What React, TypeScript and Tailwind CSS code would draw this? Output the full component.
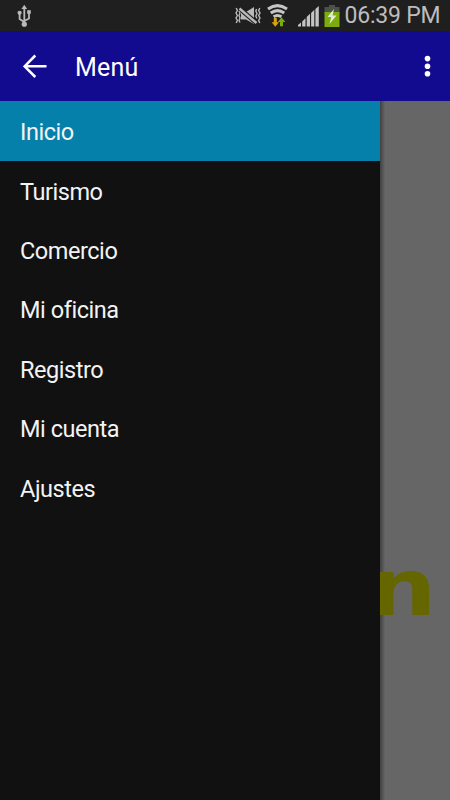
import React, { useState } from 'react';

const menuItems = ['Inicio', 'Turismo', 'Comercio', 'Mi oficina', 'Registro', 'Mi cuenta', 'Ajustes'];

function UsbIcon() {
  return (
    <svg width="16" height="24" viewBox="0 0 16 24" fill="none" stroke="#b9b9b9" strokeWidth="1.8">
      <path d="M8.3 4V20M8.3 18L3.6 15V10M8.3 17L13 14.5V9" />
      <path d="M8.3 0.8L11.2 5H5.4Z" fill="#b9b9b9" stroke="none" />
      <circle cx="8.3" cy="20.2" r="2.6" fill="#b9b9b9" stroke="none" />
      <circle cx="3.6" cy="8.8" r="2.1" fill="#b9b9b9" stroke="none" />
      <path d="M11.2 6.2H14.8V9.8H11.2Z" fill="#b9b9b9" stroke="none" />
    </svg>
  );
}

function MuteVibrateIcon() {
  return (
    <svg width="26" height="20" viewBox="0 0 26 20" fill="none" stroke="#b9b9b9">
      <path d="M6 6H11L19 1V18L11 13.5H6Z" fill="#b9b9b9" stroke="none" />
      <path d="M4.5 2.5L21.5 17" stroke="#1f1f1f" strokeWidth="4.6" />
      <path d="M4.5 2.5L21.5 17" strokeWidth="2.4" />
      <path
        d="M1.2 2L2.4 4.5L1 7L2.4 9.5L1 12L2.4 14.5L1.2 17M4 5L5 7L4 9.5L5 12L4 14.5L5 16.5M24.8 2L23.6 4.5L25 7L23.6 9.5L25 12L23.6 14.5L24.8 17M21.6 3L20.8 5L22 7.5L20.8 10L22 12.5"
        strokeWidth="1.4"
      />
    </svg>
  );
}

function WifiIcon() {
  return (
    <svg width="22" height="24" viewBox="0 0 22 24" fill="none" stroke="#c6c6c6" strokeWidth="3">
      <path d="M1 5Q10.5 -1.8 20 5M3.8 9Q10.5 4.2 17.2 9M6.6 12.8Q10.5 10.2 14.4 12.8" />
      <path d="M6.8 14H9.8V18.3H12L8.3 22.8L4.6 18.3H6.8Z" fill="#d6a411" stroke="none" />
      <path d="M13 22.3H16V18H18.4L14.5 13.3L10.8 18H13Z" fill="#78ad0b" stroke="none" />
    </svg>
  );
}

function SignalIcon() {
  return (
    <svg width="21" height="21" viewBox="0 0 21 21" fill="#c4c4c4">
      <path d="M0 20.5V19L3 16.5V20.5ZM4.2 20.5V15.5L7.5 12.2V20.5ZM8.7 20.5V11L12 7.8V20.5ZM13.1 20.5V7L16.3 3.8V20.5ZM17.4 20.5V3L20.8 0V20.5Z" />
    </svg>
  );
}

function BatteryIcon() {
  return (
    <svg width="16" height="22" viewBox="0 0 16 22">
      <path d="M5 0H11V2H15.5V9H0.5V2H5Z" fill="#4c5247" />
      <path d="M0.5 7H15.5V22H0.5Z" fill="#7cac0b" />
      <path d="M10 4L3.5 12H7.2L5.5 19L12.5 10.5H8.5Z" fill="#e5ead8" />
    </svg>
  );
}

function StatusBar() {
  return (
    <div className="flex h-[31px] shrink-0 bg-[#1f1f1f] pl-4">
      <div className="pt-1">
        <UsbIcon />
      </div>
      <div className="ml-auto flex items-start">
        <div className="pt-[6px]">
          <MuteVibrateIcon />
        </div>
        <div className="pt-[4px] pl-[6px]">
          <WifiIcon />
        </div>
        <div className="pt-[6px] pl-[9px]">
          <SignalIcon />
        </div>
        <div className="pt-[5px] pl-[5px]">
          <BatteryIcon />
        </div>
        <span className="w-[110px] pl-[4.5px] text-[23px] leading-[32px] tracking-[-0.2px] whitespace-nowrap text-[#bdbdbd]">
          06:39 PM
        </span>
      </div>
    </div>
  );
}

function AppBar() {
  return (
    <header className="flex h-[70px] shrink-0 items-center bg-[#120a8f] pr-[19px] pl-[23px] text-white">
      <button aria-label="Volver">
        <svg width="24" height="24" viewBox="0 0 24 24" fill="none" stroke="currentColor" strokeWidth="2.5">
          <path d="M23.5 12.3H2M12.3 1.5L1.6 12.3L12.3 23" />
        </svg>
      </button>
      <h1 className="ml-7 pt-[3px] text-[25px] leading-8 tracking-[0.2px]">Menú</h1>
      <button aria-label="Más opciones" className="ml-auto">
        <svg width="7" height="22" viewBox="0 0 7 22" fill="currentColor">
          <circle cx="3.5" cy="3.6" r="2.8" />
          <circle cx="3.5" cy="11.2" r="2.8" />
          <circle cx="3.5" cy="18.8" r="2.8" />
        </svg>
      </button>
    </header>
  );
}

export default function App() {
  const [active, setActive] = useState('Inicio');

  return (
    <div className="flex h-[800px] w-[450px] flex-col overflow-hidden bg-[#666666] font-['Roboto',sans-serif]">
      <StatusBar />
      <AppBar />
      <div className="flex flex-1">
        {/* Drawer */}
        <nav className="z-10 w-[380px] shrink-0 bg-[#111111]">
          {menuItems.map((item) => (
            <button
              key={item}
              onClick={() => setActive(item)}
              className={`flex h-[59.4px] w-full items-center pt-[4.5px] pl-5 text-left text-[23.5px] tracking-[-0.45px] text-[#f3f3f3] ${
                active === item ? 'bg-[#0480aa] shadow-[0_1px_0_#0480aa]' : ''
              }`}
            >
              {item}
            </button>
          ))}
        </nav>

        {/* Dimmed page behind the drawer */}
        <main className="flex flex-1">
          <div className="w-[5px] shrink-0 bg-linear-to-r from-[#414141] to-[#666666]" />
          <div className="relative flex-1">
            <span className="absolute top-[442px] right-[13px] origin-right scale-x-[1.22] font-['DejaVu_Sans',sans-serif] text-[78px] leading-[90px] font-bold text-[#666600]">
              n
            </span>
          </div>
        </main>
      </div>
    </div>
  );
}
